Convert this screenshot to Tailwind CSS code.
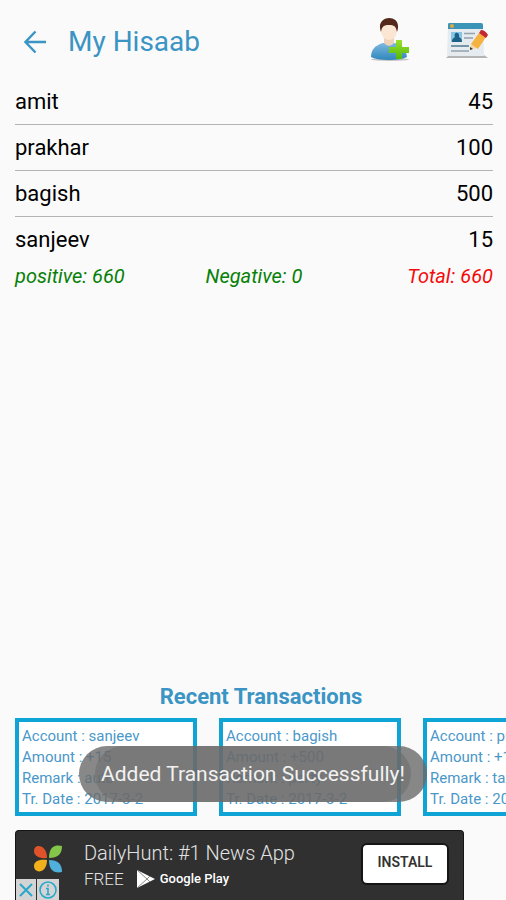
<!DOCTYPE html>
<html lang="en">
<head>
    <meta charset="UTF-8">
    <meta name="viewport" content="width=device-width, initial-scale=1.0">
    <title>My Hisaab</title>
    <script src="https://cdn.jsdelivr.net/npm/@tailwindcss/browser@4"></script>
</head>
<body class="relative h-screen flex flex-col overflow-hidden bg-[#fafafa] font-[Roboto,sans-serif] text-black">
    <header class="flex items-center shrink-0 h-[79px] pl-6 pr-4 pt-1 text-[#3a94c4]">
        <button type="button" aria-label="Back" class="mr-5">
            <svg class="w-6 h-6" viewBox="0 0 24 24" fill="none" stroke="currentColor" stroke-width="2.4"><path d="M11.500 1.500 1.500 12l10 10.500M1.500 12H22"/></svg>
        </button>
        <h1 class="flex-1 text-[28px] leading-8">My Hisaab</h1>
        <button type="button" aria-label="Add account" class="mr-8">
            <svg class="w-11 h-12" viewBox="0 0 44 48">
                <defs>
                    <linearGradient id="shirt" x1="0" y1="0" x2="0" y2="1"><stop offset="0" stop-color="#7db9e0"/><stop offset="1" stop-color="#2f86bd"/></linearGradient>
                    <linearGradient id="plus" x1="0" y1="0" x2="0" y2="1"><stop offset="0" stop-color="#9be02c"/><stop offset="1" stop-color="#55b80e"/></linearGradient>
                </defs>
                <ellipse cx="20" cy="41.500" rx="19" ry="1.500" fill="#c4c4c4"/>
                <path d="M1 39C1 31 6 27 13 25h12c7 2 11 6 12 14q-5 3-18 3T1 39z" fill="url(#shirt)"/>
                <path d="M14 19h10v6q-5 6-10 0z" fill="#f0d2b8"/>
                <ellipse cx="19" cy="13" rx="8" ry="9" fill="#fbe6d3"/>
                <path d="M11 14C4-4 34-5 27 14c-1-6-3-7-8-7s-7 1-8 7z" fill="#54291c"/>
                <path d="M26 22h6v7h7v6h-7v6h-6v-6h-7v-6h7z" fill="url(#plus)"/>
            </svg>
        </button>
        <button type="button" aria-label="Edit details">
            <svg class="w-11 h-12" viewBox="0 0 44 48">
                <path d="M0 40h42l-4-3H3z" fill="#b5b5b5"/>
                <path d="M3 5h32q2 0 2 2l1 31H1L2 7q0-2 1-2z" fill="#e6ebef"/>
                <path d="M3 5h32q2 0 2 2v4H2V7q0-2 1-2z" fill="#3c93b8"/>
                <circle cx="6" cy="8" r="2" fill="#e3a83c"/>
                <path d="M5 14h11v10H5z" fill="#86c5e3"/>
                <path d="M6 24c0-4 2-4 3-5-2-5 5-6 4 0 1 1 3 1 3 5z" fill="#1c5f87"/>
                <path d="M18 15.500h11M18 20h9M5 33h18" stroke="#93a2af" stroke-width="1.500"/>
                <path d="M5 28h18" stroke="#4f7890" stroke-width="1.500"/>
                <path d="m24 32 1-6 6 4z" fill="#f2d7a4"/>
                <path d="m24 32 0-3 3 2z" fill="#333"/>
                <path d="m25 26 8-11 7 4-8 12z" fill="#f5b23e"/>
                <path d="m33 15 2-3q4 0 7 5l-2 3z" fill="#c4272f"/>
            </svg>
        </button>
    </header>

    <main class="flex-1 flex flex-col">
        <table class="ml-[15px] mr-[13px] text-[22px] leading-[45px]">
            <tbody class="divide-y divide-[#b4b4b4]">
                <tr><td>amit</td><td class="text-right">45</td></tr>
                <tr><td>prakhar</td><td class="text-right">100</td></tr>
                <tr><td>bagish</td><td class="text-right">500</td></tr>
                <tr><td>sanjeev</td><td class="text-right">15</td></tr>
            </tbody>
        </table>
        <div class="grid grid-cols-3 ml-[15px] mr-[13px] text-xl leading-7 italic text-[#078007]">
            <p>positive: 660</p>
            <p class="text-center">Negative: 0</p>
            <p class="text-right text-[#f40b0b]">Total: 660</p>
        </div>

        <section class="mt-auto">
            <h2 class="pl-4 mb-[7px] text-center text-[22px] leading-7 font-bold text-[#3a94c4]">Recent Transactions</h2>
            <ul class="flex gap-[22px] pl-[15px] overflow-hidden text-[15px] leading-[21px] text-[#4a97c9]">
                <li class="w-[182px] shrink-0 border-4 border-[#0fa4d6] bg-white px-[3px] pt-1 pb-0.5 whitespace-nowrap">
                    <p>Account : sanjeev</p>
                    <p>Amount : +15</p>
                    <p>Remark : auto</p>
                    <p>Tr. Date : 2017-3-2</p>
                </li>
                <li class="w-[182px] shrink-0 border-4 border-[#0fa4d6] bg-white px-[3px] pt-1 pb-0.5 whitespace-nowrap">
                    <p>Account : bagish</p>
                    <p>Amount : +500</p>
                    <p>Remark : party</p>
                    <p>Tr. Date : 2017-3-2</p>
                </li>
                <li class="w-[182px] shrink-0 border-4 border-[#0fa4d6] bg-white px-[3px] pt-1 pb-0.5 whitespace-nowrap">
                    <p>Account : prakhar</p>
                    <p>Amount : +100</p>
                    <p>Remark : taxi</p>
                    <p>Tr. Date : 2017-3-2</p>
                </li>
            </ul>
        </section>
    </main>

    <aside class="relative flex items-center shrink-0 h-[70px] mt-[14px] ml-[15px] mr-[42px] pl-[18px] pr-4 rounded-t-sm border border-b-0 border-[#151515] bg-[#303030] text-[#e2e2e2]">
        <svg class="w-7 h-7 mb-3.5" viewBox="0 0 28 28">
            <path d="M13 13C4 14 0 10 0 6c0-8 13-7 13 7z" fill="#e0522a"/>
            <path d="M15 13C15-1 24 0 28 1c0 8-4 12-13 12z" fill="#84c64a"/>
            <path d="M13 15c0 14-13 14-13 6 0-4 4-7 13-6z" fill="#f2b01c"/>
            <path d="M15 15c9 0 13 4 13 12-5 1-13 1-13-12z" fill="#4fb0dc"/>
        </svg>
        <div class="flex-1 ml-[22px] mb-0.5">
            <p class="text-xl leading-7 font-light">DailyHunt: #1 News App</p>
            <p class="flex items-center text-[17px] leading-6 font-light">
                FREE
                <svg class="w-5 h-5 ml-3" viewBox="0 0 20 20">
                    <path d="M1 1v18L19 10z" fill="#fff"/>
                    <path d="m1 1 10 9-10 9M11 10l3-3M11 10l3 3" fill="none" stroke="#8b8b8b"/>
                </svg>
                <span class="ml-1 text-[13px] font-medium text-white">Google Play</span>
            </p>
        </div>
        <button type="button" class="w-[84px] h-[38px] mb-1 rounded-sm bg-white pb-1 text-sm font-semibold text-[#333] ring-2 ring-[#151515]">INSTALL</button>
        <div class="absolute left-0 bottom-0 flex gap-px text-[#28a9cb]">
            <button type="button" aria-label="Close ad" class="bg-[#d4d4d4] pt-px">
                <svg class="w-5 h-5" viewBox="0 0 20 20" fill="none" stroke="currentColor" stroke-width="2"><path d="m4 4 12 12M16 4 4 16"/></svg>
            </button>
            <button type="button" aria-label="Ad info" class="bg-[#d4d4d4] px-px pt-px">
                <svg class="w-5 h-5" viewBox="0 0 20 20" fill="none" stroke="currentColor" stroke-width="1.600"><circle cx="10" cy="10" r="8"/><path d="M10 4.500v2M8 8.500h2v6M8 14.500h4"/></svg>
            </button>
        </div>
    </aside>

    <!-- toast, with the previous one still fading out behind it -->
    <div class="absolute inset-x-0 bottom-[98px] flex justify-center">
        <div role="status" class="relative px-[22px] rounded-full bg-[#6a6a6a]/80 text-[21px] leading-14 text-[#f2f2f2] whitespace-nowrap">
            <span class="absolute inset-y-0 inset-x-4 rounded-full bg-[#6a6a6a]/50"></span>
            <span class="relative">Added Transaction Successfully!</span>
        </div>
    </div>
</body>
</html>
